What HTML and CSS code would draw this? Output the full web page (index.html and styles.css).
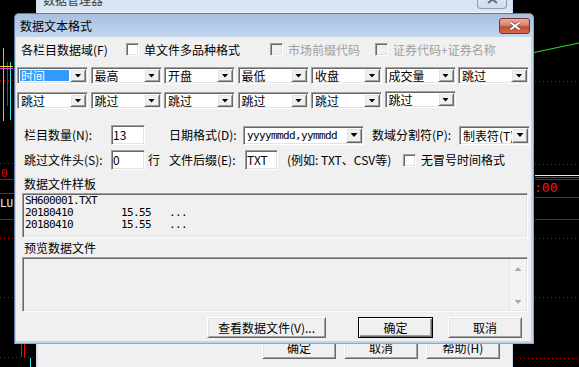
FILE: index.html
```html
<!DOCTYPE html>
<html>
<head>
  <meta charset="utf-8">
  <title>数据文本格式</title>
  <link rel="stylesheet" href="styles.css">
</head>
<body>

<div class="desk">

  <div class="chart">
    <div class="mark cyan-a"></div>
    <div class="mark cyan-b"></div>
    <div class="mark red-a"></div>
    <div class="mark yellow-a"></div>
    <div class="mark pink-a"></div>
    <div class="mark dots dots-l1"></div>
    <div class="mark dots dots-l2"></div>
    <div class="mark dots dots-l3"></div>
    <div class="mark dots dots-l4"></div>
    <div class="mark red-h red-l1"></div>
    <div class="mark red-h red-l2"></div>
    <div class="mark red-h red-l3"></div>
    <div class="mark txt-zero">0</div>
    <div class="mark txt-lu">LU</div>
    <div class="mark red-b"></div>
    <div class="mark red-c"></div>
    <div class="mark dots dots-bl"></div>
    <div class="mark cyan-c"></div>

    <div class="mark green-a"></div>
    <div class="mark dots dots-r1"></div>
    <div class="mark dots dots-r2"></div>
    <div class="mark white-r"></div>
    <div class="mark blue-r"></div>
    <div class="mark red-h red-r1"></div>
    <div class="mark txt-time">:00</div>
    <div class="mark red-h red-r2"></div>
    <div class="mark red-h red-r3"></div>
    <div class="mark dots dots-r3"></div>
    <div class="mark dots dots-r4"></div>
    <div class="mark dots dots-br"></div>
  </div>

  <!-- window behind the dialog -->
  <div class="window back">
    <div class="caption">
      <span class="caption-text">数据管理器</span>
      <span class="close close-off">
        <svg width="11" height="9" viewBox="0 0 11 9"><path d="M1 1 L10 8 M10 1 L1 8" stroke="#5c6b80" stroke-width="2"/></svg>
      </span>
    </div>
    <div class="back-client">
      <div class="back-buttons">
        <div class="button raised">确定</div>
        <div class="button raised">取消</div>
        <div class="button raised">帮助(H)</div>
      </div>
    </div>
  </div>

  <!-- dialog -->
  <div class="window dialog">
    <div class="caption">
      <span class="caption-text">数据文本格式</span>
      <span class="close">
        <svg width="12" height="10" viewBox="0 0 12 10">
          <path d="M1.5 1.5 L10.5 8.5 M10.5 1.5 L1.5 8.5" stroke="#7a3326" stroke-width="3.4"/>
          <path d="M1.5 1.5 L10.5 8.5 M10.5 1.5 L1.5 8.5" stroke="#fff" stroke-width="2"/>
        </svg>
      </span>
    </div>

    <div class="client">

      <div class="row-fields">
        <span class="fields-label">各栏目数据域(F)</span>
        <label class="check-group group-multi"><span class="check sunken"></span>单文件多品种格式</label>
        <label class="check-group group-prefix disabled"><span class="check sunken"></span>市场前缀代码</label>
        <label class="check-group disabled"><span class="check sunken"></span>证券代码+证券名称</label>
      </div>

      <div class="combo-grid">
        <div class="combo sunken"><span class="combo-value sel">时间</span><span class="combo-btn raised"><i class="tri-down"></i></span></div>
        <div class="combo sunken"><span class="combo-value">最高</span><span class="combo-btn raised"><i class="tri-down"></i></span></div>
        <div class="combo sunken"><span class="combo-value">开盘</span><span class="combo-btn raised"><i class="tri-down"></i></span></div>
        <div class="combo sunken"><span class="combo-value">最低</span><span class="combo-btn raised"><i class="tri-down"></i></span></div>
        <div class="combo sunken"><span class="combo-value">收盘</span><span class="combo-btn raised"><i class="tri-down"></i></span></div>
        <div class="combo sunken"><span class="combo-value">成交量</span><span class="combo-btn raised"><i class="tri-down"></i></span></div>
        <div class="combo sunken"><span class="combo-value">跳过</span><span class="combo-btn raised"><i class="tri-down"></i></span></div>
      </div>

      <div class="combo-grid second">
        <div class="combo sunken"><span class="combo-value">跳过</span><span class="combo-btn raised"><i class="tri-down"></i></span></div>
        <div class="combo sunken"><span class="combo-value">跳过</span><span class="combo-btn raised"><i class="tri-down"></i></span></div>
        <div class="combo sunken"><span class="combo-value">跳过</span><span class="combo-btn raised"><i class="tri-down"></i></span></div>
        <div class="combo sunken"><span class="combo-value">跳过</span><span class="combo-btn raised"><i class="tri-down"></i></span></div>
        <div class="combo sunken"><span class="combo-value">跳过</span><span class="combo-btn raised"><i class="tri-down"></i></span></div>
        <div class="combo sunken lifted"><span class="combo-value">跳过</span><span class="combo-btn raised"><i class="tri-down"></i></span></div>
      </div>

      <div class="opt-row first">
        <span class="opt-label w-count">栏目数量(N):</span>
        <span class="edit sunken w-num gap-date">13</span>
        <span class="opt-label w-date">日期格式(D):</span>
        <div class="combo tall sunken w-datefmt"><span class="combo-value mono">yyyymmdd,yymmdd</span><span class="combo-btn raised"><i class="tri-down"></i></span></div>
        <span class="opt-label w-sep">数域分割符(P):</span>
        <div class="combo tall sunken w-sepfmt"><span class="combo-value clipped">制表符(T)</span><span class="combo-btn raised"><i class="tri-down"></i></span></div>
      </div>

      <div class="opt-row">
        <span class="opt-label w-count">跳过文件头(S):</span>
        <span class="edit sunken w-num">0</span>
        <span class="opt-label w-line">行</span>
        <span class="opt-label w-ext">文件后缀(E):</span>
        <span class="edit sunken w-extval">TXT</span>
        <span class="opt-label w-hint">(例如: TXT、CSV等)</span>
        <label class="check-group"><span class="check sunken"></span>无冒号时间格式</label>
      </div>

      <div class="section-label sample-label">数据文件样板</div>
      <div class="sample sunken">SH600001.TXT
20180410        15.55   ...
20180410        15.55   ...</div>

      <div class="section-label preview-label">预览数据文件</div>
      <div class="preview sunken">
        <div class="preview-body"></div>
        <div class="vscroll">
          <i class="tri-up off"></i>
          <i class="tri-down off"></i>
        </div>
      </div>

      <div class="dialog-buttons">
        <div class="button raised w-view">查看数据文件(V)...</div>
        <div class="button default w-ok">确定</div>
        <div class="button raised w-cancel">取消</div>
      </div>

    </div>
  </div>

</div>

</body>
</html>
```

FILE: styles.css
```css
* {
  box-sizing: border-box;
  margin: 0;
  padding: 0;
}

body {
  background: #000;
  font-family: "Noto Sans CJK SC", "Noto Sans", sans-serif;
  font-size: 12px;
  line-height: 14px;
  color: #000;
}

.desk {
  position: relative;
  width: 579px;
  height: 367px;
  overflow: hidden;
}

/* chart leftovers around the windows */

.mark {
  position: absolute;
}

.cyan-a { left: 3px; top: 48px; width: 1px; height: 73px; background: #2ee6f0; }
.cyan-b { left: 10px; top: 62px; width: 1px; height: 58px; background: #2ee6f0; }
.red-a { left: 7px; top: 62px; width: 1px; height: 44px; background: #e01010; }
.yellow-a { left: 0; top: 66px; width: 13px; height: 1px; background: #e8e020; }
.pink-a { left: 0; top: 68px; width: 13px; height: 1px; background: #e040e0; }

.dots {
  height: 1px;
  background: repeating-linear-gradient(90deg, #c00000 0 1px, transparent 1px 4px);
}

.dots-l1 { left: 0; top: 80px; width: 14px; }
.dots-l2 { left: 0; top: 163px; width: 14px; }
.dots-l3 { left: 0; top: 238px; width: 14px; }
.dots-l4 { left: 0; top: 297px; width: 14px; }

.red-h { height: 1px; background: #d00000; }
.red-l1 { left: 0; top: 179px; width: 14px; }
.red-l2 { left: 0; top: 193px; width: 14px; }
.red-l3 { left: 0; top: 219px; width: 14px; }

.txt-zero {
  left: 1px;
  top: 167px;
  color: #e00000;
  font-family: "DejaVu Sans Mono", monospace;
  font-size: 11px;
}

.txt-lu {
  left: 0;
  top: 197px;
  color: #f0f0f0;
  font-family: "DejaVu Sans Mono", monospace;
  font-size: 11px;
}

.red-b { left: 21px; top: 344px; width: 1px; height: 13px; background: #e01010; }
.red-c { left: 24px; top: 344px; width: 1px; height: 13px; background: #e01010; }
.dots-bl { left: 0; top: 357px; width: 36px; }
.cyan-c { left: 30px; top: 358px; width: 1px; height: 9px; background: #2ee6f0; }

.green-a {
  left: 534px;
  top: 52px;
  width: 46px;
  height: 1px;
  background: #20e020;
  transform: rotate(-12deg);
  transform-origin: left center;
}

.dots-r1 { left: 535px; top: 81px; width: 44px; }
.dots-r2 { left: 535px; top: 164px; width: 44px; }
.white-r { left: 535px; top: 175px; width: 44px; height: 1px; background: #e8e8f0; }
.blue-r { left: 535px; top: 177px; width: 44px; height: 1px; background: #3050c0; }
.red-r1 { left: 535px; top: 179px; width: 44px; }
.red-r2 { left: 535px; top: 197px; width: 44px; }
.red-r3 { left: 535px; top: 219px; width: 44px; }
.dots-r3 { left: 535px; top: 238px; width: 44px; }
.dots-r4 { left: 535px; top: 297px; width: 44px; }
.dots-br { left: 512px; top: 358px; width: 67px; }

.txt-time {
  left: 534px;
  top: 181px;
  color: #ff1010;
  font-family: "DejaVu Sans Mono", monospace;
  font-size: 13px;
}

/* windows */

.window {
  position: absolute;
  display: flex;
  flex-direction: column;
}

.caption {
  display: flex;
  align-items: center;
  flex-shrink: 0;
}

.close {
  margin-left: auto;
  display: flex;
  align-items: center;
  justify-content: center;
}

.back {
  left: 36px;
  top: -12px;
  width: 477px;
  height: 390px;
  background: #f0f0f0;
  border-left: 2px solid #d3e2f2;
  border-right: 1px solid #c9d8ea;
}

.back .caption {
  height: 24px;
  padding-left: 5px;
  background: linear-gradient(#d2dff0, #dbe6f3);
  color: #3c3c3c;
}

.close-off {
  align-self: flex-end;
  margin-right: 5px;
  margin-bottom: 3px;
  width: 30px;
  height: 18px;
  border: 1px solid #8d9db3;
  border-top: none;
  border-radius: 0 0 4px 4px;
  background: linear-gradient(#e3eaf3, #d2dcea);
}

.back-client {
  flex: 1;
  padding-top: 324px;
}

.back-buttons {
  display: flex;
  justify-content: flex-end;
  gap: 8px;
  padding-right: 12px;
}

.back-buttons .button {
  width: 74px;
  height: 23px;
}

.dialog {
  left: 14px;
  top: 13px;
  width: 520px;
  height: 331px;
  border: 1px solid #5d7a9e;
  border-right-color: #6fb4e0;
  border-bottom-color: #6fb4e0;
  border-radius: 5px 5px 0 0;
  background: #c0d4ec;
}

.dialog .caption {
  height: 23px;
  padding-left: 5px;
  border-radius: 4px 4px 0 0;
  background: linear-gradient(#a7c0e0, #c4d7ee);
}

.dialog .close {
  margin-right: 3px;
  width: 31px;
  height: 16px;
  border: 1px solid #7b3327;
  border-radius: 3px;
  background: linear-gradient(#e6ab9c, #d8846f 45%, #c54e35 55%, #cf6a52);
}

.client {
  flex: 1;
  margin: 0 2px 2px 1px;
  background: #f0f0f0;
  display: flex;
  flex-direction: column;
}

/* classic 3D edges */

.sunken {
  border: 1px solid;
  border-color: #a0a0a0 #fff #fff #a0a0a0;
  box-shadow: inset 1px 1px 0 #696969, inset -1px -1px 0 #e3e3e3;
}

.raised {
  border: 1px solid;
  border-color: #fff #696969 #696969 #fff;
  box-shadow: inset 1px 1px 0 #e3e3e3, inset -1px -1px 0 #a0a0a0;
  background: #f0f0f0;
}

.button {
  display: flex;
  align-items: center;
  justify-content: center;
}

.button.default {
  border: 1px solid #000;
  box-shadow: inset 1px 1px 0 #fff, inset -1px -1px 0 #696969, inset -2px -2px 0 #a0a0a0;
  background: #f0f0f0;
}

/* first row */

.row-fields {
  display: flex;
  align-items: center;
  height: 19px;
  margin-top: 3px;
  padding-left: 5px;
}

.fields-label {
  width: 105px;
}

.check-group {
  display: flex;
  align-items: center;
  gap: 5px;
}

.group-multi { width: 144px; }
.group-prefix { width: 105px; }

.check {
  width: 13px;
  height: 13px;
  background: #fff;
}

.disabled {
  color: #a0a0a0;
}

.disabled .check {
  background: #f0f0f0;
}

/* field combos */

.combo-grid {
  display: grid;
  grid-template-columns: repeat(7, 71px);
  column-gap: 2.5px;
  margin-top: 8px;
  margin-left: 1px;
}

.combo {
  display: flex;
  height: 17px;
  padding: 1px;
  background: #fff;
}

.combo.lifted {
  margin-top: -1px;
}

.combo-value {
  flex: 1;
  display: flex;
  align-items: center;
  padding-left: 2px;
  white-space: nowrap;
  line-height: 13px;
}

.combo-value.sel {
  margin: 1px;
  padding-left: 1px;
  background: #3399ff;
  color: #fff;
}

.combo-value.clipped {
  overflow: hidden;
}

.combo-btn {
  width: 16px;
  display: flex;
  align-items: center;
  justify-content: center;
}

.tri-down,
.tri-up {
  display: block;
  width: 7px;
  height: 4px;
  background: #000;
}

.tri-down { clip-path: polygon(0 0, 100% 0, 50% 100%); }
.tri-up { clip-path: polygon(50% 0, 100% 100%, 0 100%); }

.tri-down.off,
.tri-up.off {
  background: #a8a8a8;
}

/* options rows */

.opt-row {
  display: flex;
  align-items: center;
  height: 20px;
  margin-top: 5px;
  padding-left: 8px;
}

.opt-row.first {
  margin-top: 16px;
}

.opt-label {
  white-space: nowrap;
}

.edit {
  height: 20px;
  display: flex;
  align-items: center;
  padding-left: 1px;
  background: #fff;
}

.combo.tall {
  height: 19px;
}

.mono {
  font-family: "DejaVu Sans Mono", monospace;
  font-size: 11px;
  letter-spacing: -0.62px;
}

.w-count { width: 87px; }
.w-num { width: 34px; }
.gap-date { margin-right: 24px; }
.w-date { width: 74px; }
.w-datefmt { width: 121px; margin-right: 8px; }
.w-sep { width: 87px; }
.w-sepfmt { width: 71px; }
.w-line { margin-left: 3px; width: 12px; margin-right: 9px; }
.w-ext { width: 76px; }
.w-extval { width: 33px; margin-right: 9px; }
.w-hint { width: 116px; }

/* sample and preview boxes */

.section-label {
  height: 16px;
  display: flex;
  align-items: center;
  padding-left: 8px;
}

.sample-label { margin-top: 6px; }
.preview-label { margin-top: 2px; }

.sample {
  margin: 1px 0 0 6px;
  width: 506px;
  height: 45px;
  padding: 1px 0 0 2px;
  background: #f0f0f0;
  white-space: pre;
  font-family: "DejaVu Sans Mono", monospace;
  font-size: 11px;
  letter-spacing: -0.62px;
  line-height: 12px;
}

.preview {
  display: flex;
  margin: 1px 0 0 6px;
  width: 506px;
  height: 55px;
  padding: 1px;
  background: #f0f0f0;
}

.preview-body {
  flex: 1;
}

.vscroll {
  width: 17px;
  display: flex;
  flex-direction: column;
  align-items: center;
  justify-content: space-between;
  padding: 8px 0 6px;
  background: #f3f3f3;
  border-left: 1px solid #e4e4e4;
}

/* dialog buttons */

.dialog-buttons {
  display: flex;
  margin-top: 5px;
  padding-left: 191px;
}

.dialog-buttons .button {
  height: 21px;
}

.w-view { width: 119px; margin-right: 32px; }
.w-ok { width: 75px; margin-right: 15px; }
.w-cancel { width: 74px; }
```
